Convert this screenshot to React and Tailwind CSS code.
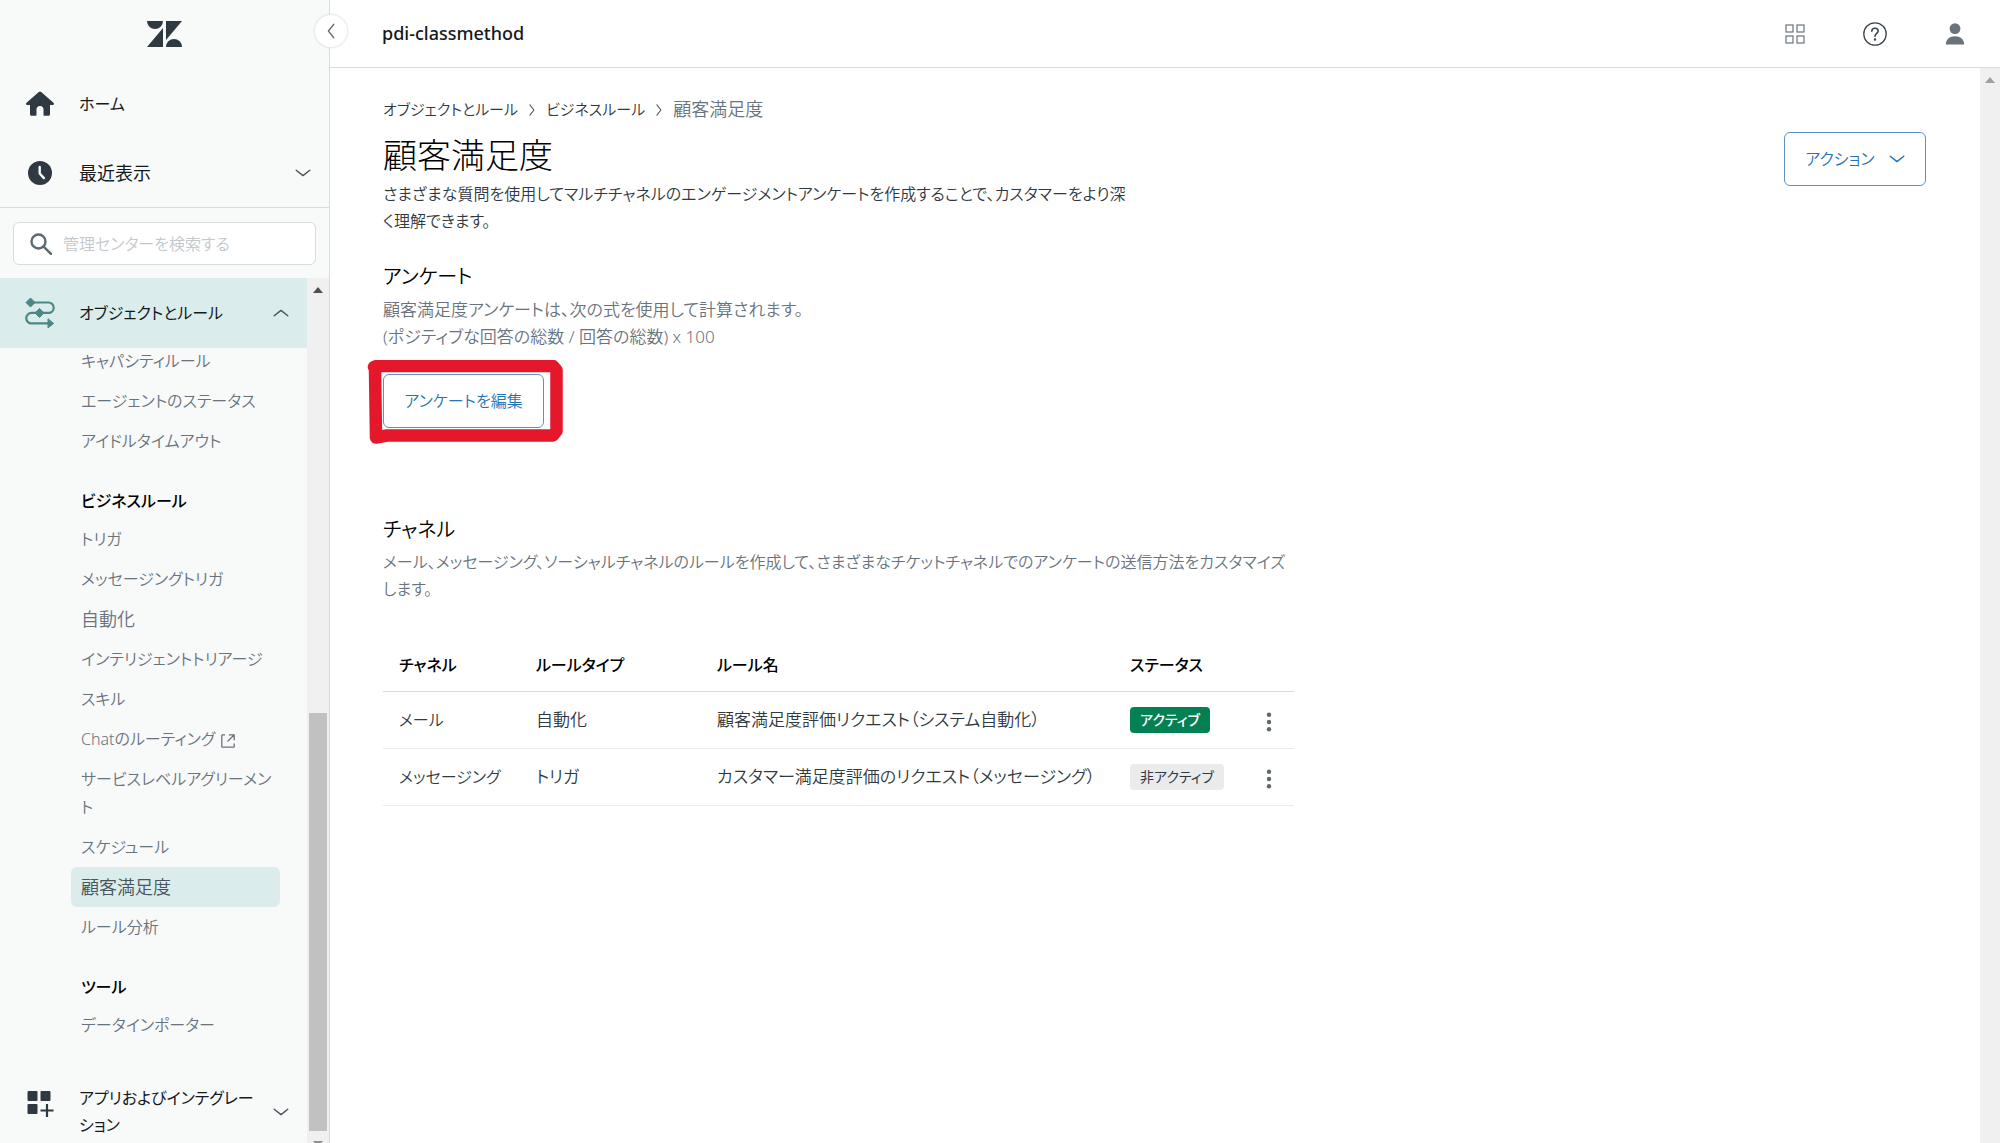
import clsx from "clsx";

const sections = [
  {
    items: [
      { label: "キャパシティルール" },
      { label: "エージェントのステータス" },
      { label: "アイドルタイムアウト" },
    ],
  },
  {
    title: "ビジネスルール",
    items: [
      { label: "トリガ" },
      { label: "メッセージングトリガ" },
      { label: "自動化", kanji: true },
      { label: "インテリジェントトリアージ" },
      { label: "スキル" },
      { label: "Chatのルーティング", external: true },
      { label: "サービスレベルアグリーメント" },
      { label: "スケジュール" },
      { label: "顧客満足度", kanji: true, active: true },
      { label: "ルール分析" },
    ],
  },
  {
    title: "ツール",
    items: [{ label: "データインポーター" }],
  },
];

const rules = [
  { channel: "メール", type: "自動化", name: "顧客満足度評価リクエスト（システム自動化）", active: true },
  { channel: "メッセージング", type: "トリガ", name: "カスタマー満足度評価のリクエスト（メッセージング）", active: false },
];

function Chevron({ className }) {
  return (
    <svg viewBox="0 0 16 8" className={clsx("h-2 w-4 shrink-0", className)} fill="none" stroke="currentColor" strokeWidth="1.4" strokeLinecap="round" strokeLinejoin="round">
      <path d="M1.2 1.2 8 6.6l6.8-5.4" />
    </svg>
  );
}

function Logo() {
  return (
    <svg viewBox="0 0 35 26" className="h-[26px] w-[35px]" fill="#2f3941">
      <path d="M0 0h16a8 8 0 0 1-16 0Z" />
      <path d="M16 7v19H0Z" />
      <path d="M19 0h16L19 19Z" />
      <path d="M19 26a8 8 0 0 1 16 0Z" />
    </svg>
  );
}

function HomeIcon() {
  return (
    <svg viewBox="0 0 30 26" className="w-[30px] shrink-0" fill="#2f3941">
      <path d="M13.8 1.1a1.8 1.8 0 0 1 2.4 0l12.3 10.7c.9.8.6 2.3-.8 2.3H25v9.4c0 .7-.5 1.2-1.2 1.2h-4.3c-.6 0-1-.4-1-1v-5.4c0-2-1.4-3.3-3.5-3.3s-3.5 1.3-3.5 3.3v5.4c0 .6-.4 1-1 1H6.2c-.7 0-1.2-.5-1.2-1.2v-9.4H2.3c-1.4 0-1.7-1.5-.8-2.3Z" />
    </svg>
  );
}

function ClockIcon() {
  return (
    <svg viewBox="0 0 30 26" className="w-[30px] shrink-0">
      <circle cx="15" cy="13" r="12" fill="#2f3941" />
      <path d="M14.7 7v6.5l4.2 4.6" fill="none" stroke="#f8f9f9" strokeWidth="2.4" strokeLinecap="round" strokeLinejoin="round" />
    </svg>
  );
}

function RulesIcon() {
  return (
    <svg viewBox="0 0 30 32" className="w-[30px] shrink-0" fill="none" stroke="#4a8785" strokeWidth="2.2">
      <path d="M6 5.5h17.5a5.2 5.2 0 0 1 0 10.4H6.5a5.2 5.2 0 0 0 0 10.5H24" />
      <path d="m5.5 1 4.5 4.5-4.5 4.5L1 5.5ZM14.5 11.4l4.5 4.5-4.5 4.5-4.5-4.5ZM23 21.8l5.6 4.6L23 31Z" fill="#4a8785" strokeWidth="1" strokeLinejoin="round" />
    </svg>
  );
}

function AppsIcon() {
  return (
    <svg viewBox="0 0 30 28" className="-mt-4 w-[30px] shrink-0" fill="#2f3941">
      <rect x="2.5" y="1" width="10" height="10" rx="1" />
      <rect x="15.5" y="1" width="10" height="10" rx="1" />
      <rect x="2.5" y="14" width="10" height="10" rx="1" />
      <path d="M15.5 20.5h13M22 14v13" stroke="#2f3941" strokeWidth="2.2" />
    </svg>
  );
}

function SearchIcon() {
  return (
    <svg viewBox="0 0 22 22" className="w-[22px] shrink-0" fill="none" stroke="#5c6970" strokeWidth="2.4">
      <circle cx="8.5" cy="8.5" r="7" />
      <path d="m13.6 13.6 7.4 7.2" strokeLinecap="round" />
    </svg>
  );
}

function ExternalIcon() {
  return (
    <svg viewBox="0 0 14 14" className="mt-1 w-[14px] shrink-0" fill="none" stroke="currentColor" strokeWidth="1.3">
      <path d="M4 .8H1.5a.7.7 0 0 0-.7.7v11c0 .4.3.7.7.7h11c.4 0 .7-.3.7-.7V9.5M7.800.8h5.400v5.400M13 1 6.500 7.500" />
    </svg>
  );
}

function ScrollArrow({ className }) {
  return (
    <svg viewBox="0 0 10 6" className={clsx("h-[6px] w-[10px] shrink-0", className)} fill="currentColor">
      <path d="M5 0l5 6H0Z" />
    </svg>
  );
}

function NavItem({ label, kanji, active, external }) {
  return (
    <li>
      <a
        href="#"
        className={clsx(
          "flex items-center gap-[6px] rounded-md py-[6px] pl-[10px] leading-7",
          kanji ? "text-[18px]" : "text-[16px]",
          active ? "bg-[#daeceb] text-[#49545c]" : "text-[#68737d]"
        )}
      >
        <span>{label}</span>
        {external && <ExternalIcon />}
      </a>
    </li>
  );
}

function Sidebar() {
  return (
    <aside className="relative flex w-[330px] shrink-0 flex-col border-r border-[#d8dcde] bg-[#f8f9f9]">
      <div className="flex h-[68px] shrink-0 items-center justify-center">
        <Logo />
      </div>
      <button type="button" aria-label="サイドバーを閉じる" className="absolute -right-[18px] top-[15px] z-10 flex size-8 items-center justify-center rounded-full bg-white text-[#68737d] shadow-[0_0_2px_1px_#e2e5e6]">
        <Chevron className="rotate-90" />
      </button>

      <a href="#" className="flex h-[71px] shrink-0 items-center gap-6 pl-[25px] text-[16px] font-normal text-[#14191d]">
        <HomeIcon />
        ホーム
      </a>
      <button type="button" className="flex h-[69px] shrink-0 items-center gap-6 border-b border-[#d8dcde] pl-[25px] pr-[18px] text-left text-[18px] font-normal text-[#14191d]">
        <ClockIcon />
        <span className="flex-1">最近表示</span>
        <Chevron className="text-[#49545c]" />
      </button>

      <label className="mx-[13px] mb-[13px] mt-[14px] flex h-[43px] shrink-0 items-center gap-[11px] rounded-md border border-[#d8dcde] bg-white pl-4">
        <SearchIcon />
        <input type="search" placeholder="管理センターを検索する" aria-label="管理センターを検索する" className="min-w-0 flex-1 text-[16px] outline-none placeholder:text-[#c2c8cc]" />
      </label>

      <div className="flex min-h-0 flex-1">
        <nav className="min-w-0 flex-1 overflow-hidden">
          <button type="button" className="flex h-[70px] w-full items-center gap-6 bg-[#daeceb] pl-[25px] pr-[18px] text-left text-[16px] font-normal text-[#14191d]">
            <RulesIcon />
            <span className="flex-1">オブジェクトとルール</span>
            <Chevron className="rotate-180 text-[#49545c]" />
          </button>

          <div className="-mt-[7px] ml-[71px] mr-[27px]">
            {sections.map((section, i) => (
              <div key={i}>
                {section.title && (
                  <h3 className="mb-1 pl-[10px] pt-[26px] text-[16px] font-medium leading-7 text-black">{section.title}</h3>
                )}
                <ul>
                  {section.items.map((item) => (
                    <NavItem key={item.label} {...item} />
                  ))}
                </ul>
              </div>
            ))}
          </div>

          <button type="button" className="mt-10 flex w-full items-center pl-[25px] pr-[18px] text-left text-[16px] font-normal leading-[27px] text-[#14191d]">
            <AppsIcon />
            <span className="ml-6 mr-2 flex-1">アプリおよびインテグレーション</span>
            <Chevron className="text-[#49545c]" />
          </button>
        </nav>

        <div className="flex w-[22px] shrink-0 flex-col items-center overflow-hidden bg-[#f0f0f0]">
          <ScrollArrow className="mt-[9px] text-[#505050]" />
          <div className="flex-1" />
          <div className="h-[48.3%] w-[18px] bg-[#c1c1c1]" />
          <ScrollArrow className="-mb-1 mt-[10px] rotate-180 text-[#909090]" />
        </div>
      </div>
    </aside>
  );
}

function Topbar() {
  return (
    <header className="flex h-[68px] shrink-0 items-center justify-between border-b border-[#d8dcde] pl-[52px] pr-[35px]">
      <span className="text-[18px] font-medium text-[#14191d]">pdi-classmethod</span>
      <div className="flex items-center gap-[58px]">
        <button type="button" aria-label="製品">
          <svg viewBox="0 0 20 20" className="size-5" fill="none" stroke="#68737d" strokeWidth="1.2">
            <rect x="1" y="1" width="7" height="7" />
            <rect x="12" y="1" width="7" height="7" />
            <rect x="1" y="12" width="7" height="7" />
            <rect x="12" y="12" width="7" height="7" />
          </svg>
        </button>
        <button type="button" aria-label="ヘルプ">
          <svg viewBox="0 0 24 24" className="size-6" fill="none" stroke="#3c464d" strokeWidth="1.3" strokeLinecap="round">
            <circle cx="12" cy="12" r="11.2" />
            <path d="M8.8 9.2C8.9 7.4 10.1 6.3 12 6.3s3.2 1.1 3.2 2.7c0 2.3-3.2 2.6-3.2 5.2" strokeWidth="1.6" />
            <circle cx="12" cy="17.4" r=".6" fill="#3c464d" />
          </svg>
        </button>
        <button type="button" aria-label="プロフィール">
          <svg viewBox="0 0 20 22" className="h-[22px] w-5" fill="#68737d">
            <circle cx="10" cy="5.6" r="5.4" />
            <path d="M.8 21.5c0-5 3.7-8.3 9.2-8.3s9.2 3.3 9.2 8.3Z" />
          </svg>
        </button>
      </div>
    </header>
  );
}

function RuleTable() {
  return (
    <table className="mt-[36px] w-[911px] table-fixed text-left text-[16px]">
      <colgroup>
        <col className="w-[137px]" />
        <col className="w-[181px]" />
        <col className="w-[413px]" />
        <col className="w-[116px]" />
        <col />
      </colgroup>
      <thead>
        <tr className="h-[52px] border-b border-[#d8dcde] text-black">
          <th className="pl-4 font-medium">チャネル</th>
          <th className="pl-4 font-medium">ルールタイプ</th>
          <th className="pl-4 font-medium">ルール名</th>
          <th className="pl-4 font-medium">ステータス</th>
          <th aria-label="操作" />
        </tr>
      </thead>
      <tbody>
        {rules.map((rule) => (
          <tr key={rule.name} className="h-[57px] border-b border-[#e9ebed] text-[#2f3941]">
            <td className="pl-4">{rule.channel}</td>
            <td className="pl-4 text-[17px]">{rule.type}</td>
            <td className="whitespace-nowrap pl-4 text-[17px]">{rule.name}</td>
            <td className="whitespace-nowrap pl-4">
              <span
                className={clsx(
                  "inline-block rounded-sm px-[10px] text-[14px] leading-[26px]",
                  rule.active ? "bg-[#038153] font-medium text-white" : "bg-[#e9ebed] font-normal text-[#2f3941]"
                )}
              >
                {rule.active ? "アクティブ" : "非アクティブ"}
              </span>
            </td>
            <td>
              <button type="button" aria-label="メニュー" className="ml-9 mt-1 block">
                <svg viewBox="0 0 6 20" className="h-5 w-[6px]" fill="#5c6970">
                  <circle cx="3" cy="2.8" r="2.2" />
                  <circle cx="3" cy="10" r="2.2" />
                  <circle cx="3" cy="17.2" r="2.2" />
                </svg>
              </button>
            </td>
          </tr>
        ))}
      </tbody>
    </table>
  );
}

export default function App() {
  return (
    <div className="flex h-screen overflow-hidden bg-white font-['Noto_Sans','Noto_Sans_CJK_JP',sans-serif] font-[350] [font-feature-settings:'palt']" lang="ja">
      <Sidebar />
      <div className="flex min-w-0 flex-1 flex-col">
        <Topbar />
        <div className="flex min-h-0 flex-1">
          <main className="flex min-w-0 flex-1 items-start justify-between overflow-hidden pl-[53px] pr-[54px]">
            <div className="pt-7">
              <nav className="flex items-center gap-[10px] text-[15px] leading-[27px] text-[#2f3941]">
                <a href="#">オブジェクトとルール</a>
                <Chevron className="-mx-1 scale-75 -rotate-90 text-[#49545c]" />
                <a href="#">ビジネスルール</a>
                <Chevron className="-mx-1 scale-75 -rotate-90 text-[#49545c]" />
                <span className="text-[18px] text-[#68737d]">顧客満足度</span>
              </nav>
              <h1 className="mt-2 text-[34px] font-light leading-[48px] text-black">顧客満足度</h1>
              <p className="mt-[2px] max-w-[748px] text-[16px] leading-[27px] text-[#2f3941]">
                さまざまな質問を使用してマルチチャネルのエンゲージメントアンケートを作成することで、カスタマーをより深く理解できます。
              </p>

              <h2 className="mt-[26px] text-[20px] leading-8 text-black">アンケート</h2>
              <p className="mt-[3px] text-[17px] leading-[27px] text-[#68737d]">
                顧客満足度アンケートは、次の式を使用して計算されます。
                <br />
                (ポジティブな回答の総数 / 回答の総数) x 100
              </p>
              <div className="relative mt-6 w-fit">
                <button type="button" className="h-[54px] w-[161px] rounded-md border border-[#5c93c4] text-[16px] text-[#1f73b7]">
                  アンケートを編集
                </button>
                <svg viewBox="0 0 196 84" className="pointer-events-none absolute -left-4 -top-[14px] h-[84px] w-[196px]" fill="none" stroke="#e4172b" strokeWidth="12.5" strokeLinecap="round" strokeLinejoin="round">
                  <path d="M7 7 10 6H186L189.5 10V71L186 75.5H20L9 77.5 8 9" />
                </svg>
              </div>

              <h2 className="mt-[86px] text-[20px] leading-8 text-black">チャネル</h2>
              <p className="mt-[3px] max-w-[911px] text-[16px] leading-[27px] text-[#68737d]">
                メール、メッセージング、ソーシャルチャネルのルールを作成して、さまざまなチケットチャネルでのアンケートの送信方法をカスタマイズします。
              </p>
              <RuleTable />
            </div>

            <button type="button" className="mt-16 flex h-[54px] w-[142px] shrink-0 items-center justify-center gap-[14px] rounded-md border border-[#5c93c4] text-[16px] text-[#1f73b7]">
              アクション
              <Chevron />
            </button>
          </main>
          <div className="flex w-5 shrink-0 flex-col items-center bg-[#f0f0f0]">
            <ScrollArrow className="mt-[9px] text-[#a0a0a0]" />
          </div>
        </div>
      </div>
    </div>
  );
}
